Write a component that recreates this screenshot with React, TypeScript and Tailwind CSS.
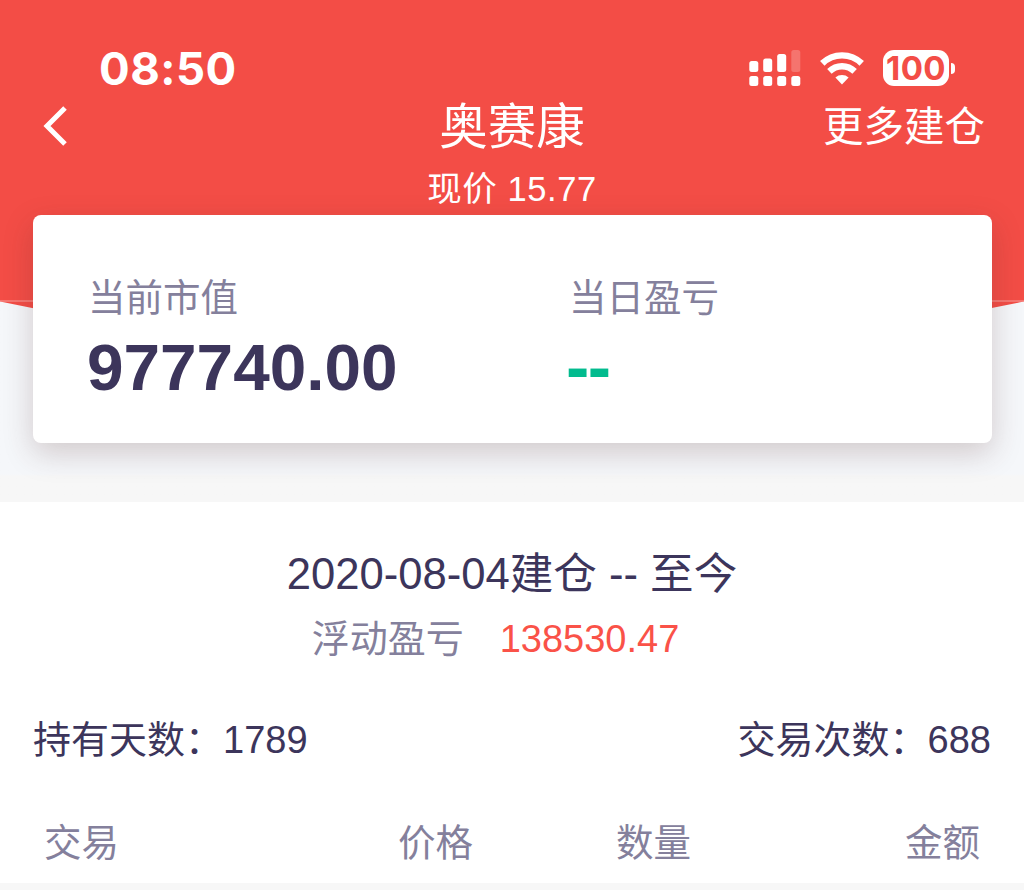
import { clsx } from 'clsx';

const columns = [
  { label: '交易', className: 'w-[200px] text-left' },
  { label: '价格', className: 'w-[229px] text-right' },
  { label: '数量', className: 'w-[218px] text-right' },
  { label: '金额', className: 'w-[289px] text-right' },
];

function SignalIcon() {
  return (
    <svg width="52" height="38" viewBox="0 0 52 38" fill="#fff">
      <rect x="0.3" y="12" width="9" height="11" rx="2.5" />
      <rect x="14.2" y="9.5" width="9" height="13.5" rx="2.5" />
      <rect x="28.2" y="5" width="9" height="18" rx="2.5" />
      <rect x="42.3" y="1" width="9" height="22" rx="2.5" opacity="0.22" />
      <rect x="0.3" y="27" width="9" height="10" rx="2.5" />
      <rect x="14.2" y="27" width="9" height="10" rx="2.5" />
      <rect x="28.2" y="27" width="9" height="10" rx="2.5" />
      <rect x="42.3" y="27" width="9" height="10" rx="2.5" />
    </svg>
  );
}

function WifiIcon() {
  return (
    <svg width="44" height="33" viewBox="0 0 44 33" fill="none" stroke="#fff" strokeWidth="6.4">
      <path d="M2.3 11.4a28.2 28.2 0 0 1 39.4 0" />
      <path d="M9.4 19.4a18 18 0 0 1 25.2 0" />
      <path d="M15.4 25.6a10 10 0 0 1 13.2 0L22 32.4z" fill="#fff" stroke="none" />
    </svg>
  );
}

function Battery() {
  return (
    <div className="flex items-center gap-[2px]">
      <div className="flex h-9 w-[66px] items-center justify-center rounded-[11px] bg-white pt-px font-['Inter',sans-serif] text-[33px] font-bold leading-none tracking-[0.4px] text-[#f34d46]">
        100
      </div>
      <div className="h-[11px] w-1 rounded-r-full bg-white" />
    </div>
  );
}

export default function App() {
  return (
    <div className="h-[890px] w-[1024px] overflow-hidden bg-white font-['Liberation_Sans','Noto_Sans_CJK_SC',sans-serif] text-[#3c355b]">
      <div className="h-[502px] bg-linear-to-b from-[#f5f7fa] from-[474px] to-[#f7f7f7] to-[476px]">
        <header className="h-[300px] bg-[#f34d46] text-white">
          {/* Status bar */}
          <div className="flex h-[100px] items-start justify-between pl-[99px] pr-[69px] pt-[48px]">
            <div className="font-['Inter',sans-serif] text-[45.5px] font-bold leading-[42px] tracking-[0.5px]">08:50</div>
            <div className="flex items-center gap-[19px] pt-px">
              <SignalIcon />
              <WifiIcon />
              <Battery />
            </div>
          </div>

          {/* Title */}
          <div className="grid grid-cols-3 items-center px-[39px]">
            <svg width="32" height="42" viewBox="0 0 32 42" fill="none" stroke="#fff" strokeWidth="5">
              <path d="M26 2L8 20L26 38" />
            </svg>
            <h1 className="text-center text-[48.5px] leading-[52px]">奥赛康</h1>
            <span className="pt-px text-right text-[40.5px] leading-[52px]">更多建仓</span>
          </div>
          <div className="mt-[12px] text-center text-[34.5px] leading-[48px] tracking-[0.6px]">现价 15.77</div>
        </header>
        <svg className="block" width="1024" height="60" viewBox="0 0 1024 60">
          <path d="M0 1.5Q512 112 1024 1.5V0H0Z" fill="#f34d46" />
          <path d="M0 1H1024" stroke="#f9a29d" strokeWidth="1.2" />
        </svg>

        {/* Summary card */}
        <section className="relative mx-[33px] mt-[-145px] flex h-[228px] w-[959px] rounded-[8px] bg-white px-14 pt-[60px] shadow-[0_10px_30px_rgba(80,40,40,0.22)]">
          <div className="w-[480px]">
            <div className="-ml-px text-[37.5px] leading-[46px] text-[#84809c]">当前市值</div>
            <div className="-ml-[2px] mt-[11px] text-[65.7px] font-bold leading-[72px]">977740.00</div>
          </div>
          <div>
            <div className="text-[37.5px] leading-[46px] text-[#84809c]">当日盈亏</div>
            <div className="-ml-[3px] mt-[10px] text-[70px] font-bold leading-[72px] tracking-[-1.5px] text-[#02bb8e]">--</div>
          </div>
        </section>
      </div>

      {/* Position */}
      <section className="flex h-[381px] flex-col pt-[46px]">
        <div className="text-center text-[43.6px] leading-[52px]">2020-08-04建仓 -- 至今</div>
        <div className="mt-[13px] flex justify-center gap-9 pr-[33px] text-[38px] leading-[52px]">
          <span className="text-[#84809c]">浮动盈亏</span>
          <span className="text-[#fa5248]">138530.47</span>
        </div>
        <div className="mt-[49px] flex justify-between px-[33px] text-[38px] leading-[52px]">
          <span>持有天数：1789</span>
          <span>交易次数：688</span>
        </div>
        <div className="mt-[51px] flex px-[44px] text-[37.5px] leading-[52px] text-[#84809c]">
          {columns.map((column) => (
            <div key={column.label} className={clsx('shrink-0', column.className)}>
              {column.label}
            </div>
          ))}
        </div>
      </section>
      <div className="h-[7px] bg-[#f7f7f7]" />
    </div>
  );
}
